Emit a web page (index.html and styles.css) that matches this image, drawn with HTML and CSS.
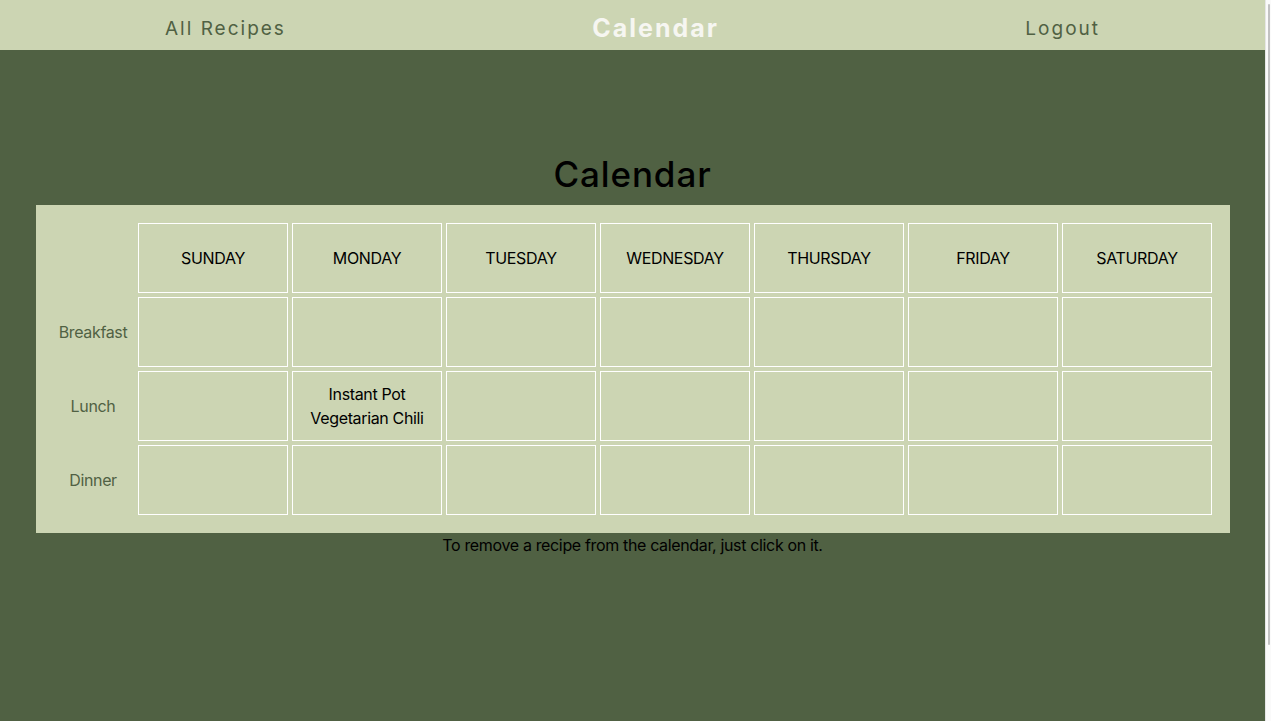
FILE: index.html
```html
<!DOCTYPE html>
<html lang="en">
<head>
<meta charset="utf-8">
<title>Calendar</title>
<link rel="stylesheet" href="styles.css">
</head>
<body>
<div class="page">
  <nav class="nav">
    <a class="nav-link">All Recipes</a>
    <a class="nav-link nav-active">Calendar</a>
    <a class="nav-link">Logout</a>
  </nav>
  <main class="main">
    <h1 class="title">Calendar</h1>
    <div class="calendar">
      <table class="cal-table">
        <thead>
          <tr>
            <th class="corner"></th>
            <th class="day">SUNDAY</th>
            <th class="day">MONDAY</th>
            <th class="day">TUESDAY</th>
            <th class="day">WEDNESDAY</th>
            <th class="day">THURSDAY</th>
            <th class="day">FRIDAY</th>
            <th class="day">SATURDAY</th>
          </tr>
        </thead>
        <tbody>
          <tr>
            <th class="meal">Breakfast</th>
            <td class="slot"></td><td class="slot"></td><td class="slot"></td><td class="slot"></td><td class="slot"></td><td class="slot"></td><td class="slot"></td>
          </tr>
          <tr>
            <th class="meal">Lunch</th>
            <td class="slot"></td><td class="slot">Instant Pot Vegetarian Chili</td><td class="slot"></td><td class="slot"></td><td class="slot"></td><td class="slot"></td><td class="slot"></td>
          </tr>
          <tr>
            <th class="meal">Dinner</th>
            <td class="slot"></td><td class="slot"></td><td class="slot"></td><td class="slot"></td><td class="slot"></td><td class="slot"></td><td class="slot"></td>
          </tr>
        </tbody>
      </table>
    </div>
    <p class="hint">To remove a recipe from the calendar, just click on it.</p>
  </main>
</div>
<div class="scrollbar"><div class="thumb"></div></div>
</body>
</html>
```
FILE: styles.css
```css
html, body {
  margin: 0;
  padding: 0;
  height: 100%;
}
body {
  display: flex;
  background: #ffffff;
  font-family: Inter, "Noto Sans", "Liberation Sans", sans-serif;
  color: #000;
  overflow: hidden;
}
.page {
  flex: 1;
  background: #506143;
  min-height: 721px;
}
.scrollbar {
  width: 6px;
  background: #fafafa;
  display: flex;
  justify-content: center;
  padding-top: 4px;
  box-sizing: border-box;
  border-left: 1px solid #e6e6e6;
}
.thumb {
  width: 2px;
  height: 641px;
  background: #c2c2c2;
  border-radius: 1px;
}
.nav {
  height: 50px;
  background: #ccd5b3;
  display: flex;
  align-items: center;
  justify-content: space-between;
  padding: 0 165px;
}
.nav-link {
  font-size: 19px;
  letter-spacing: 2px;
  color: #506143;
  text-decoration: none;
  line-height: 50px;
  padding-top: 7px;
}
.nav-active {
  font-size: 25px;
  font-weight: 700;
  color: #f6f6f1;
  letter-spacing: 2px;
  padding-top: 6px;
}
.main {
  padding-top: 104px;
  display: flex;
  flex-direction: column;
  align-items: center;
}
.title {
  margin: 0 0 11px;
  font-size: 35px;
  line-height: 40px;
  font-weight: 500;
  letter-spacing: 0.9px;
  color: #000;
}
.calendar {
  align-self: stretch;
  margin: 0 35px 0 36px;
  padding: 14px;
  background: #ccd5b3;
}
.cal-table {
  width: 100%;
  border-collapse: separate;
  border-spacing: 4px;
  table-layout: fixed;
  font-size: 16px;
  letter-spacing: -0.35px;
}
.corner, .meal {
  width: 80px;
  box-sizing: border-box;
  padding: 0 2px 0 0;
  font-weight: 400;
  color: #506143;
  text-align: center;
}
.day, .slot {
  width: 150px;
  height: 70px;
  border: 1px solid #ffffff;
  padding: 0 8px;
  box-sizing: border-box;
  text-align: center;
  vertical-align: middle;
  font-weight: 400;
  line-height: 24px;
  color: #000;
}
.hint {
  margin: 0;
  font-size: 16px;
  line-height: 24px;
  letter-spacing: -0.35px;
  color: #000;
}
```
